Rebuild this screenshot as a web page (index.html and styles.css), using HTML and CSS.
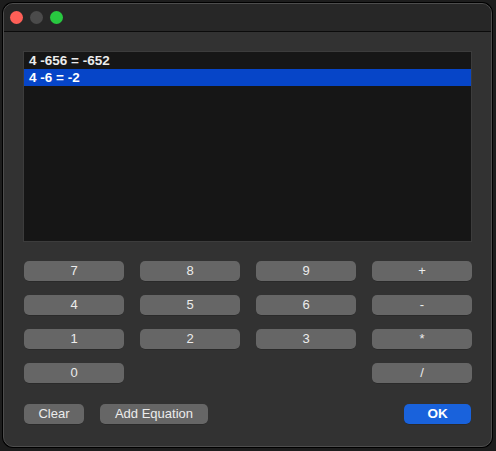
FILE: index.html
```html
<!DOCTYPE html>
<html>
<head>
<meta charset="utf-8">
<link rel="stylesheet" href="styles.css">
</head>
<body>
<div class="window">
  <div class="titlebar">
    <span class="light red"></span>
    <span class="light gray"></span>
    <span class="light green"></span>
  </div>
  <div class="content">
    <div class="list">
      <div class="row">4 -656 = -652</div>
      <div class="row selected">4 -6 = -2</div>
    </div>
    <div class="keypad">
      <button class="btn">7</button>
      <button class="btn">8</button>
      <button class="btn">9</button>
      <button class="btn">+</button>
      <button class="btn">4</button>
      <button class="btn">5</button>
      <button class="btn">6</button>
      <button class="btn">-</button>
      <button class="btn">1</button>
      <button class="btn">2</button>
      <button class="btn">3</button>
      <button class="btn">*</button>
      <button class="btn">0</button>
      <span></span>
      <span></span>
      <button class="btn">/</button>
    </div>
    <div class="actions">
      <button class="btn clear">Clear</button>
      <button class="btn add">Add Equation</button>
      <span class="spacer"></span>
      <button class="btn ok">OK</button>
    </div>
  </div>
</div>
</body>
</html>
```

FILE: styles.css
```css
html, body {
  margin: 0;
  padding: 0;
  background: #1d1d1d;
  width: 496px;
  height: 451px;
  overflow: hidden;
  font-family: "Liberation Sans", Arial, sans-serif;
}

.window {
  margin: 3px 0 0 3px;
  width: 487px;
  height: 442px;
  border: 1px solid #4d4d4d;
  border-radius: 10px;
  background: #323232;
  box-shadow: 0 0 0 1px #000;
  overflow: hidden;
  display: flex;
  flex-direction: column;
}

.titlebar {
  height: 27px;
  flex: none;
  background: #272727;
  border-bottom: 1px solid #0b0b0b;
  display: flex;
  align-items: center;
  gap: 7px;
  padding-left: 6px;
}

.light {
  width: 13px;
  height: 13px;
  border-radius: 50%;
  display: block;
}
.red { background: #fe5f57; }
.gray { background: #4b4b4b; }
.green { background: #28c840; }

.content {
  padding: 19px 19px 0 19px;
  display: flex;
  flex-direction: column;
}

.list {
  width: 447px;
  height: 189px;
  border: 1px solid #3c3c3c;
  background: #161616;
  padding-top: 0;
}

.row {
  height: 17px;
  line-height: 17px;
  padding-left: 5px;
  color: #ececec;
  font-size: 13.5px;
  font-weight: bold;
}

.row.selected {
  background: #0645c8;
  color: #ffffff;
}

.keypad {
  margin-top: 19px;
  margin-left: 1px;
  display: grid;
  grid-template-columns: repeat(4, 100px);
  grid-auto-rows: 20px;
  column-gap: 16px;
  row-gap: 14px;
}

.btn {
  height: 20px;
  border: none;
  border-radius: 5px;
  background: #666666;
  color: #ececec;
  font-family: "Liberation Sans", Arial, sans-serif;
  font-size: 13px;
  padding: 0;
  margin: 0;
  line-height: 20px;
  box-shadow: 0 0.5px 0 rgba(0,0,0,0.3);
}

.actions {
  margin-top: 21px;
  margin-left: 1px;
  display: flex;
  align-items: center;
}

.clear { width: 60px; }
.add { width: 108px; margin-left: 16px; }
.spacer { flex: 1; }
.ok {
  width: 67px;
  margin-right: 1px;
  background: #1962dc;
  color: #ffffff;
  font-weight: bold;
  font-size: 13.5px;
}
```
